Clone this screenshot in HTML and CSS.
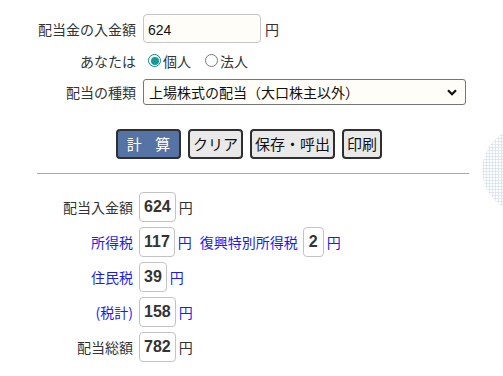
FILE: index.html
```html
<!DOCTYPE html>
<html lang="ja">
<head>
<meta charset="utf-8">
<link rel="stylesheet" href="styles.css">
</head>
<body>
<div class="deco-clip"><div class="deco"></div></div>
<main class="page">
  <form class="form">
    <label class="lbl" for="amt">配当金の入金額</label>
    <div class="field"><input id="amt" class="num" type="text" value="624"><span class="unit">円</span></div>

    <span class="lbl">あなたは</span>
    <div class="field radios">
      <label class="radio"><span class="dot on"></span>個人</label>
      <label class="radio"><span class="dot"></span>法人</label>
    </div>

    <label class="lbl" for="kind">配当の種類</label>
    <div class="field">
      <div class="select" id="kind">
        <span>上場株式の配当（大口株主以外）</span>
        <svg class="chev" width="10" height="7" viewBox="0 0 10 7"><path d="M1 1.2 L5 5.2 L9 1.2" fill="none" stroke="#111" stroke-width="2.2"/></svg>
      </div>
    </div>
  </form>

  <div class="buttons">
    <button class="btn primary" type="button">計 算</button>
    <button class="btn" type="button">クリア</button>
    <button class="btn" type="button">保存・呼出</button>
    <button class="btn" type="button">印刷</button>
  </div>

  <hr class="rule">

  <div class="results">
    <span class="rl">配当入金額</span>
    <div class="rv"><span class="box">624</span><span class="unit">円</span></div>

    <span class="rl blue">所得税</span>
    <div class="rv"><span class="box">117</span><span class="unit blue">円</span><span class="sub blue">復興特別所得税</span><span class="box">2</span><span class="unit blue">円</span></div>

    <span class="rl blue">住民税</span>
    <div class="rv"><span class="box">39</span><span class="unit blue">円</span></div>

    <span class="rl blue">(税計)</span>
    <div class="rv"><span class="box">158</span><span class="unit blue">円</span></div>

    <span class="rl">配当総額</span>
    <div class="rv"><span class="box">782</span><span class="unit">円</span></div>
  </div>
</main>
</body>
</html>
```
FILE: styles.css
```css
* { box-sizing: border-box; }
html, body { margin: 0; padding: 0; background: #fff; }
body {
  font-family: "Noto Sans CJK JP", "Liberation Sans", sans-serif;
  font-size: 14px;
  color: #333;
  position: relative;
  width: 503px;
  height: 376px;
  overflow: hidden;
}
.page { padding-top: 14px; }

.form {
  display: grid;
  grid-template-columns: 136px 1fr;
  grid-template-rows: 29px 35px 28px;
  column-gap: 7px;
  align-items: center;
}
.lbl { text-align: right; line-height: 20px; }
.field { display: flex; align-items: center; }

.num {
  width: 118px;
  height: 29px;
  border: 1px solid #c6c6c6;
  border-radius: 4px;
  background: #fffdf7;
  font-family: "Liberation Sans", Arial, sans-serif;
  font-size: 14px;
  color: #111;
  padding: 2px 4px 0;
  outline: none;
}
.unit { margin-left: 4px; line-height: 20px; }

.radios { gap: 14px; padding-left: 5px; }
.radio { display: flex; align-items: center; gap: 2px; }
.dot {
  width: 13px; height: 13px;
  border: 1px solid #777;
  border-radius: 50%;
  background: #fff;
  position: relative;
}
.dot.on { border: 1px solid #0f8585; }
.dot.on::after {
  content: ""; position: absolute; left: 1.5px; top: 1.5px;
  width: 8px; height: 8px; border-radius: 50%; background: #16999a;
}

.select {
  width: 323px;
  height: 26px;
  border: 1px solid #767676;
  border-radius: 3px;
  background: #fffdf7;
  color: #111;
  display: flex;
  align-items: center;
  justify-content: space-between;
  padding: 0 8px 0 5px;
}
.chev { display: block; }

.buttons {
  display: flex;
  gap: 7px;
  margin-top: 23px;
  margin-left: 116px;
}
.btn {
  height: 30px;
  border: 2px solid #2f2f2f;
  border-radius: 4px;
  background: #e9e9e9;
  font-family: "Noto Sans CJK JP", sans-serif;
  font-size: 15px;
  color: #111;
  padding: 0 3px;
  line-height: 24px;
}
.btn.primary {
  width: 65px;
  background: #5673a6;
  color: #fff;
  letter-spacing: 5px;
  padding-left: 8px;
}

.rule {
  margin: 14px 34px 0 37px;
  border: 0;
  border-top: 1px solid #a8a8a8;
  height: 0;
}

.results {
  display: grid;
  grid-template-columns: 133px 1fr;
  column-gap: 6px;
  row-gap: 5px;
  align-items: center;
  margin-top: 18px;
}
.rl { text-align: right; line-height: 20px; }
.rv { display: flex; align-items: center; height: 30px; }
.box {
  display: inline-block;
  height: 30px;
  min-width: 21px;
  padding: 0 4px;
  border: 1px solid #c3c3c3;
  border-radius: 4px;
  font-family: "Liberation Sans", Arial, sans-serif;
  font-weight: bold;
  font-size: 16px;
  line-height: 28px;
  color: #333;
  text-align: center;
}
.rv .unit { margin-left: 3px; }
.sub { margin-left: 8px; margin-right: 5px; }
.blue { color: #1b1bf0; }

.deco-clip {
  position: absolute;
  right: 0;
  top: 128px;
  width: 21px;
  height: 84px;
  overflow: hidden;
}
.deco {
  width: 84px;
  height: 84px;
  border-radius: 50%;
  background-image: radial-gradient(circle, #d6e1f1 0.9px, transparent 1.3px);
  background-size: 3px 3px;
}
```
